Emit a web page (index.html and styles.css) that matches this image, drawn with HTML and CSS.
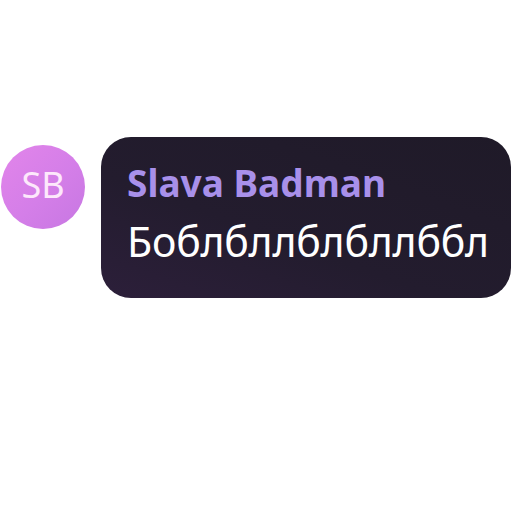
FILE: index.html
```html
<!DOCTYPE html>
<html>
<head>
<meta charset="utf-8">
<link rel="stylesheet" href="styles.css">
</head>
<body>
<div class="row">
  <div class="avatar">SB</div>
  <div class="bubble">
    <div class="name">Slava Badman</div>
    <div class="text">Боблбллблбллббл</div>
  </div>
</div>
</body>
</html>
```
FILE: styles.css
```css
html, body {
  margin: 0;
  padding: 0;
  background: #ffffff;
}
body {
  width: 512px;
  height: 512px;
  overflow: hidden;
  font-family: "Noto Sans", "Open Sans", sans-serif;
}
.row {
  display: flex;
  align-items: flex-start;
  gap: 16px;
  padding-top: 137px;
  padding-left: 1px;
}
.avatar {
  width: 84px;
  height: 84px;
  margin-top: 8px;
  border-radius: 50%;
  background: linear-gradient(135deg, #e285ea 0%, #d47ee8 55%, #c777e2 100%);
  color: #fde8fb;
  font-size: 36px;
  box-sizing: border-box;
  padding-bottom: 5px;
  display: flex;
  align-items: center;
  justify-content: center;
  flex-shrink: 0;
}
.bubble {
  width: 410px;
  height: 161px;
  box-sizing: border-box;
  border-radius: 30px;
  background: linear-gradient(20deg, #2c1f3a 0%, #231c2e 40%, #1f1a28 100%);
  padding: 22px 0 0 26px;
}
.name {
  color: #a890ea;
  font-weight: 700;
  font-size: 37px;
  line-height: 48px;
}
.text {
  color: #ffffff;
  font-size: 41px;
  line-height: 56px;
  margin-top: 6px;
  letter-spacing: -0.2px;
  white-space: nowrap;
}
```
